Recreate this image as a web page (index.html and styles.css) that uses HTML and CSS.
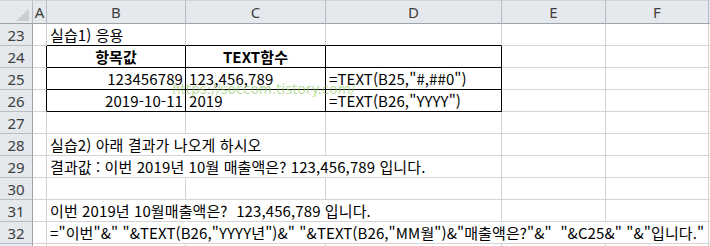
FILE: index.html
```html
<!DOCTYPE html>
<html lang="ko">
<head>
    <meta charset="UTF-8">
    <title>TEXT 함수 실습</title>
    <link rel="stylesheet" href="styles.css">
</head>
<body>
    <div class="sheet-wrap">
        <table class="sheet">
            <thead>
                <tr class="col-head">
                    <th class="corner c-row"><span class="tri"></span></th>
                    <th class="c-a">A</th>
                    <th class="c-b">B</th>
                    <th class="c-c">C</th>
                    <th class="c-d">D</th>
                    <th class="c-e">E</th>
                    <th class="c-f">F</th>
                    <th class="c-g"></th>
                </tr>
            </thead>
            <tbody>
                <tr>
                    <th class="row-head">23</th>
                    <td></td>
                    <td class="edge-b">실습1) 응용</td>
                    <td class="edge-b"></td>
                    <td class="edge-b"></td>
                    <td></td><td></td><td></td>
                </tr>
                <tr>
                    <th class="row-head">24</th>
                    <td class="edge-r"></td>
                    <td class="box title">항목값</td>
                    <td class="box title">TEXT함수</td>
                    <td class="box"></td>
                    <td></td><td></td><td></td>
                </tr>
                <tr>
                    <th class="row-head">25</th>
                    <td class="edge-r"></td>
                    <td class="box num">123456789</td>
                    <td class="box">123,456,789</td>
                    <td class="box">=TEXT(B25,"#,##0")</td>
                    <td></td><td></td><td></td>
                </tr>
                <tr>
                    <th class="row-head">26</th>
                    <td class="edge-r"></td>
                    <td class="box num">2019-10-11</td>
                    <td class="box">2019</td>
                    <td class="box">=TEXT(B26,"YYYY")</td>
                    <td></td><td></td><td></td>
                </tr>
                <tr>
                    <th class="row-head">27</th>
                    <td></td><td></td><td></td><td></td><td></td><td></td><td></td>
                </tr>
                <tr>
                    <th class="row-head">28</th>
                    <td></td>
                    <td colspan="2">실습2) 아래 결과가 나오게 하시오</td>
                    <td></td><td></td><td></td><td></td>
                </tr>
                <tr>
                    <th class="row-head">29</th>
                    <td></td>
                    <td colspan="3">결과값 : 이번 2019년 10월 매출액은? 123,456,789 입니다.</td>
                    <td></td><td></td><td></td>
                </tr>
                <tr>
                    <th class="row-head">30</th>
                    <td></td><td></td><td></td><td></td><td></td><td></td><td></td>
                </tr>
                <tr>
                    <th class="row-head">31</th>
                    <td></td>
                    <td colspan="3">이번 2019년 10월매출액은?&nbsp; 123,456,789 입니다.</td>
                    <td></td><td></td><td></td>
                </tr>
                <tr>
                    <th class="row-head">32</th>
                    <td></td>
                    <td colspan="5">="이번"&amp;" "&amp;TEXT(B26,"YYYY년")&amp;" "&amp;TEXT(B26,"MM월")&amp;"매출액은?"&amp;"&nbsp; "&amp;C25&amp;" "&amp;"입니다."</td>
                    <td></td>
                </tr>
                <tr>
                    <th class="row-head"></th>
                    <td></td><td></td><td></td><td></td><td></td><td></td><td></td>
                </tr>
            </tbody>
        </table>
        <div class="watermark">https://soccom.tistory.com/</div>
    </div>
</body>
</html>
```

FILE: styles.css
```css
html, body {
    margin: 0;
    padding: 0;
    background: #fff;
    overflow: hidden;
}
.sheet-wrap {
    position: relative;
    width: 710px;
    height: 246px;
    overflow: hidden;
}
.sheet {
    border-collapse: separate;
    border-spacing: 0;
    table-layout: fixed;
    width: 749px;
    font-family: "Noto Sans CJK KR", "Noto Sans", sans-serif;
    font-size: 15px;
    letter-spacing: 0.1px;
    color: #000;
}
.sheet th,
.sheet td {
    box-sizing: border-box;
    padding: 0 3px 0 3px;
    border-right: 1px solid #d4d4d4;
    border-bottom: 1px solid #d4d4d4;
    height: 22px;
    line-height: 20px;
    white-space: nowrap;
    overflow: visible;
    vertical-align: bottom;
    text-align: left;
    font-weight: normal;
}

/* column headers */
.col-head th {
    height: 24px;
    background: #e5e8ed;
    border-top: 1px solid #d0d3d8;
    border-right: 1px solid #b9bdc3;
    border-bottom: 1px solid #9ea3aa;
    color: #3e3e3e;
    text-align: center;
    vertical-align: middle;
    font-family: "Noto Sans", sans-serif;
    font-size: 15px;
    letter-spacing: 0;
    line-height: 21px;
    padding: 0;
}
.c-row { width: 33px; }
.c-a { width: 14px; }
.c-b { width: 139px; }
.c-c { width: 140px; }
.c-d { width: 176px; }
.c-e { width: 104px; }
.c-f { width: 103px; }
.c-g { width: 40px; }

.corner {
    position: relative;
}
.tri {
    position: absolute;
    right: 3px;
    bottom: 2px;
    width: 0;
    height: 0;
    border-left: 13px solid transparent;
    border-bottom: 12px solid #c9ccd1;
}

/* row headers */
.sheet .row-head {
    background: #e5e8ed;
    border-right: 1px solid #9ea3aa;
    border-bottom: 1px solid #b9bdc3;
    color: #3e3e3e;
    text-align: center;
    font-family: "Noto Sans", sans-serif;
    font-size: 15px;
    letter-spacing: 0;
    padding: 0;
}

/* black box around B24:D26 */
.sheet .box {
    border-right: 1px solid #000;
    border-bottom: 1px solid #000;
}
.sheet .edge-r {
    border-right: 1px solid #000;
}
.sheet .edge-b {
    border-bottom: 1px solid #000;
}
.sheet .title {
    font-weight: bold;
    text-align: center;
}
.sheet .num {
    text-align: right;
    padding-right: 2px;
}

.watermark {
    position: absolute;
    left: 172px;
    top: 81px;
    font-family: "DejaVu Sans", sans-serif;
    font-size: 13.5px;
    color: rgba(140, 200, 95, 0.6);
    pointer-events: none;
}
```
